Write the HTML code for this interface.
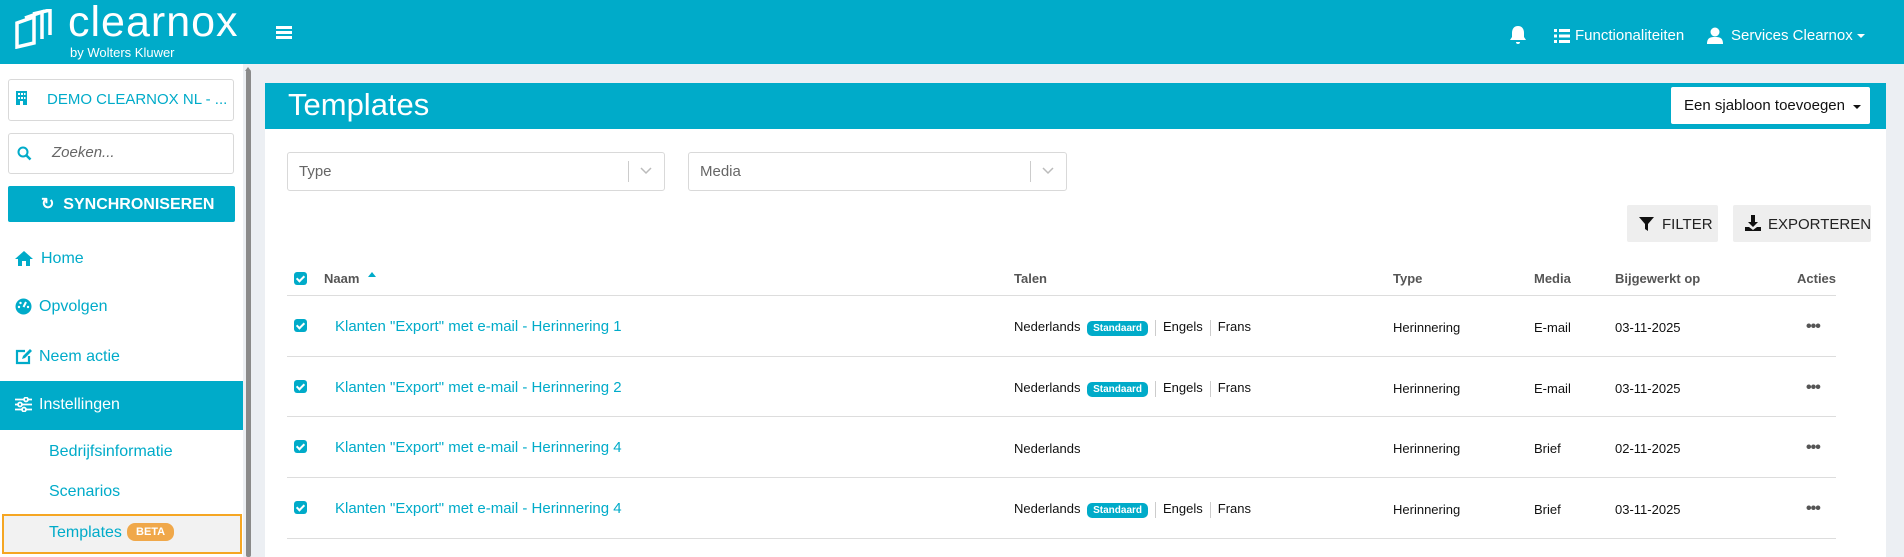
<!DOCTYPE html>
<html><head><meta charset="utf-8"><style>
*{box-sizing:border-box;margin:0;padding:0}
body{width:1904px;height:557px;overflow:hidden;background:#eceff3;font-family:"Liberation Sans",sans-serif;position:relative;color:#222}
.a{position:absolute}
.top{left:0;top:0;width:1904px;height:64px;background:#00abc9}
.w{color:#fff}
.side{left:0;top:64px;width:243px;height:493px;background:#fff}
.box{border:1px solid #d9d9d9;border-radius:3px;background:#fff}
.teal{color:#00abc9}
.nav{font-size:16px;color:#00abc9}
.card{left:265px;top:83px;width:1621px;height:474px;background:#fff}
.hdr{left:265px;top:83px;width:1621px;height:46px;background:#00abc9}
.th{font-size:13px;font-weight:bold;color:#555;top:271px}
.td{font-size:13px;color:#111}
.line{height:1px;background:#ddd;left:287px;width:1549px}
.cb{width:13px;height:13px;background:#00abc9;border-radius:3px}
.cb:after{content:"";position:absolute;left:4px;top:2px;width:3px;height:6px;border:solid #fff;border-width:0 2px 2px 0;transform:rotate(45deg)}
.badge{background:#00abc9;color:#fff;font-size:10px;font-weight:bold;border-radius:5px;padding:2px 6px;margin-left:3px}
.sep{display:inline-block;width:1px;height:16px;background:#ccc;vertical-align:middle;margin:0 7px}
.btn{background:#eeeeee;border-radius:2px;font-size:14px;color:#222}
.dots{font-size:16px;color:#555;font-weight:bold;letter-spacing:-1px}
.nm{font-size:15px}
</style></head><body>
<div class="a top"></div>
<svg class="a" style="left:14px;top:9px" width="42" height="40" viewBox="0 0 42 40"><g fill="none" stroke="#fff" stroke-width="3.5"><path d="M3 14 L20 8 L20 34 L3 38 Z"/><path d="M11 9 L28 3 L28 30"/><path d="M19 5 L36 1 L36 26"/></g></svg>
<div class="a w" style="left:68px;top:-2px;font-size:43px;letter-spacing:1px">clearnox</div>
<div class="a w" style="left:70px;top:45px;font-size:13px">by Wolters Kluwer</div>
<div class="a" style="left:276px;top:26px;width:16px;height:2.5px;background:#fff;box-shadow:0 5px 0 #fff,0 10px 0 #fff"></div>
<svg class="a" style="left:1509px;top:25px" width="18" height="20" viewBox="0 0 18 20"><path d="M9 1 C5 1 3 4 3 8 L3 12 L1 15 L17 15 L15 12 L15 8 C15 4 13 1 9 1Z M7 17 H11 A2 2 0 0 1 7 17Z" fill="#fff"/></svg>
<svg class="a" style="left:1554px;top:29px" width="16" height="14"><g fill="#fff"><rect x="0" y="0" width="3" height="3"/><rect x="5" y="0" width="11" height="3"/><rect x="0" y="5.5" width="3" height="3"/><rect x="5" y="5.5" width="11" height="3"/><rect x="0" y="11" width="3" height="3"/><rect x="5" y="11" width="11" height="3"/></g></svg>
<div class="a w" style="left:1575px;top:27px;font-size:15px">Functionaliteiten</div>
<svg class="a" style="left:1707px;top:27px" width="16" height="17"><circle cx="8" cy="5" r="4.5" fill="#fff"/><path d="M0 17 C0 11 3 10 8 10 C13 10 16 11 16 17Z" fill="#fff"/></svg>
<div class="a w" style="left:1731px;top:27px;font-size:15px">Services Clearnox</div>
<div class="a" style="left:1857px;top:34px;border:4px solid transparent;border-top-color:#fff;border-bottom:0"></div>

<div class="a side"></div>
<div class="a" style="left:246px;top:70px;width:5px;height:487px;background:#8a8a8a;border-radius:2px"></div>
<div class="a" style="left:245px;top:64px;border:3px solid transparent;border-bottom:4px solid #888;"></div>
<div class="a box" style="left:8px;top:79px;width:226px;height:42px"></div>
<svg class="a" style="left:16px;top:91px" width="11" height="14"><rect width="11" height="14" fill="#00abc9"/><g fill="#fff"><rect x="2" y="2" width="2" height="2"/><rect x="5" y="2" width="2" height="2"/><rect x="8" y="2" width="1.5" height="2"/><rect x="2" y="6" width="2" height="2"/><rect x="5" y="6" width="2" height="2"/><rect x="8" y="6" width="1.5" height="2"/><rect x="4" y="10" width="3" height="4"/></g></svg>
<div class="a teal" style="left:47px;top:91px;font-size:15px">DEMO CLEARNOX NL - ...</div>
<div class="a box" style="left:8px;top:133px;width:226px;height:41px"></div>
<svg class="a" style="left:17px;top:146px" width="15" height="15" viewBox="0 0 15 15"><circle cx="6" cy="6" r="4.5" fill="none" stroke="#00abc9" stroke-width="2"/><path d="M9.5 9.5 L13.5 13.5" stroke="#00abc9" stroke-width="2.5"/></svg>
<div class="a" style="left:52px;top:144px;font-size:15px;font-style:italic;color:#666">Zoeken...</div>
<div class="a" style="left:8px;top:186px;width:227px;height:36px;background:#00abc9;border-radius:2px"></div>
<div class="a w" style="left:41px;top:194px;font-size:16px;font-weight:bold">&#x21bb;&nbsp;&nbsp;SYNCHRONISEREN</div>
<svg class="a" style="left:15px;top:251px" width="18" height="15"><path d="M9 0 L18 8 L15 8 L15 15 L11 15 L11 10 L7 10 L7 15 L3 15 L3 8 L0 8Z" fill="#00abc9"/></svg>
<div class="a nav" style="left:41px;top:250px">Home</div>
<svg class="a" style="left:15px;top:298px" width="17" height="17"><circle cx="8.5" cy="8.5" r="8" fill="#00abc9"/><path d="M8.5 9 L11 4" stroke="#fff" stroke-width="2"/><circle cx="4" cy="9" r="1.2" fill="#fff"/><circle cx="5.5" cy="5" r="1.2" fill="#fff"/><circle cx="13" cy="9" r="1.2" fill="#fff"/></svg>
<div class="a nav" style="left:39px;top:298px">Opvolgen</div>
<svg class="a" style="left:15px;top:348px" width="17" height="17"><path d="M10 3 H2 V15 H14 V8" fill="none" stroke="#00abc9" stroke-width="2.2"/><path d="M7 11 L8 8 L15 1 L17 3 L10 10Z" fill="#00abc9"/></svg>
<div class="a nav" style="left:39px;top:348px">Neem actie</div>
<div class="a" style="left:0;top:381px;width:243px;height:49px;background:#00abc9"></div>
<svg class="a" style="left:15px;top:397px" width="17" height="15"><g stroke="#fff" stroke-width="1.8" fill="#00abc9"><path d="M0 2.5H17M0 7.5H17M0 12.5H17"/><circle cx="11" cy="2.5" r="2"/><circle cx="5" cy="7.5" r="2"/><circle cx="9" cy="12.5" r="2"/></g></svg>
<div class="a w" style="left:39px;top:396px;font-size:16px">Instellingen</div>
<div class="a nav" style="left:49px;top:443px">Bedrijfsinformatie</div>
<div class="a nav" style="left:49px;top:483px">Scenarios</div>
<div class="a" style="left:2px;top:514px;width:240px;height:40px;border:2px solid #f5a623;background:#f2f2f2"></div>
<div class="a nav" style="left:49px;top:524px">Templates</div>
<div class="a" style="left:127px;top:523px;background:#f0a84a;color:#fff;font-size:11px;font-weight:bold;border-radius:8px;padding:3px 9px">BETA</div>

<div class="a card"></div>
<div class="a hdr"></div>
<div class="a w" style="left:288px;top:87px;font-size:31px">Templates</div>
<div class="a" style="left:1671px;top:87px;width:199px;height:37px;background:#fff;border-radius:2px"></div>
<div class="a" style="left:1684px;top:97px;font-size:15px;color:#111">Een sjabloon toevoegen</div>
<div class="a" style="left:1853px;top:105px;border:4px solid transparent;border-top-color:#111;border-bottom:0"></div>

<div class="a box" style="left:287px;top:152px;width:378px;height:39px"></div>
<div class="a" style="left:299px;top:163px;font-size:15px;color:#666">Type</div>
<div class="a" style="left:628px;top:161px;width:1px;height:21px;background:#ccc"></div>
<svg class="a" style="left:640px;top:167px" width="12" height="8"><path d="M1 1 L6 6 L11 1" fill="none" stroke="#bbb" stroke-width="1.5"/></svg>
<div class="a box" style="left:688px;top:152px;width:379px;height:39px"></div>
<div class="a" style="left:700px;top:163px;font-size:15px;color:#666">Media</div>
<div class="a" style="left:1030px;top:161px;width:1px;height:21px;background:#ccc"></div>
<svg class="a" style="left:1042px;top:167px" width="12" height="8"><path d="M1 1 L6 6 L11 1" fill="none" stroke="#bbb" stroke-width="1.5"/></svg>

<div class="a btn" style="left:1627px;top:205px;width:91px;height:37px"></div>
<svg class="a" style="left:1639px;top:217px" width="15" height="14"><path d="M0 0 H15 L9 7 V14 L6 12 V7Z" fill="#111"/></svg>
<div class="a" style="left:1662px;top:216px;font-size:15px">FILTER</div>
<div class="a btn" style="left:1733px;top:205px;width:138px;height:37px"></div>
<svg class="a" style="left:1745px;top:215px" width="16" height="16"><path d="M6 0 H10 V7 H13 L8 12 L3 7 H6Z" fill="#111"/><path d="M0 12 H4 L8 15 L12 12 H16 V16 H0Z" fill="#111"/></svg>
<div class="a" style="left:1768px;top:216px;font-size:15px">EXPORTEREN</div>

<div class="a cb" style="left:294px;top:272px"></div>
<div class="a th" style="left:324px">Naam</div>
<div class="a" style="left:368px;top:272px;border:4px solid transparent;border-bottom:5px solid #00abc9;border-top:0"></div>
<div class="a th" style="left:1014px">Talen</div>
<div class="a th" style="left:1393px">Type</div>
<div class="a th" style="left:1534px">Media</div>
<div class="a th" style="left:1615px">Bijgewerkt op</div>
<div class="a th" style="left:1797px">Acties</div>
<div class="a line" style="top:295px"></div>

<div class="a cb" style="left:294px;top:319px"></div>
<div class="a teal nm" style="left:335px;top:318px">Klanten "Export" met e-mail - Herinnering 1</div>
<div class="a td" style="left:1014px;top:319px">Nederlands <span class="badge">Standaard</span><span class="sep"></span>Engels<span class="sep"></span>Frans</div>
<div class="a td" style="left:1393px;top:320px">Herinnering</div><div class="a td" style="left:1534px;top:320px">E-mail</div><div class="a td" style="left:1615px;top:320px">03-11-2025</div>
<div class="a dots" style="left:1806px;top:318px">•••</div>
<div class="a line" style="top:356px"></div>

<div class="a cb" style="left:294px;top:380px"></div>
<div class="a teal nm" style="left:335px;top:379px">Klanten "Export" met e-mail - Herinnering 2</div>
<div class="a td" style="left:1014px;top:380px">Nederlands <span class="badge">Standaard</span><span class="sep"></span>Engels<span class="sep"></span>Frans</div>
<div class="a td" style="left:1393px;top:381px">Herinnering</div><div class="a td" style="left:1534px;top:381px">E-mail</div><div class="a td" style="left:1615px;top:381px">03-11-2025</div>
<div class="a dots" style="left:1806px;top:379px">•••</div>
<div class="a line" style="top:416px"></div>

<div class="a cb" style="left:294px;top:440px"></div>
<div class="a teal nm" style="left:335px;top:439px">Klanten "Export" met e-mail - Herinnering 4</div>
<div class="a td" style="left:1014px;top:441px">Nederlands</div>
<div class="a td" style="left:1393px;top:441px">Herinnering</div><div class="a td" style="left:1534px;top:441px">Brief</div><div class="a td" style="left:1615px;top:441px">02-11-2025</div>
<div class="a dots" style="left:1806px;top:439px">•••</div>
<div class="a line" style="top:477px"></div>

<div class="a cb" style="left:294px;top:501px"></div>
<div class="a teal nm" style="left:335px;top:500px">Klanten "Export" met e-mail - Herinnering 4</div>
<div class="a td" style="left:1014px;top:501px">Nederlands <span class="badge">Standaard</span><span class="sep"></span>Engels<span class="sep"></span>Frans</div>
<div class="a td" style="left:1393px;top:502px">Herinnering</div><div class="a td" style="left:1534px;top:502px">Brief</div><div class="a td" style="left:1615px;top:502px">03-11-2025</div>
<div class="a dots" style="left:1806px;top:500px">•••</div>
<div class="a line" style="top:538px"></div>
</body></html>
